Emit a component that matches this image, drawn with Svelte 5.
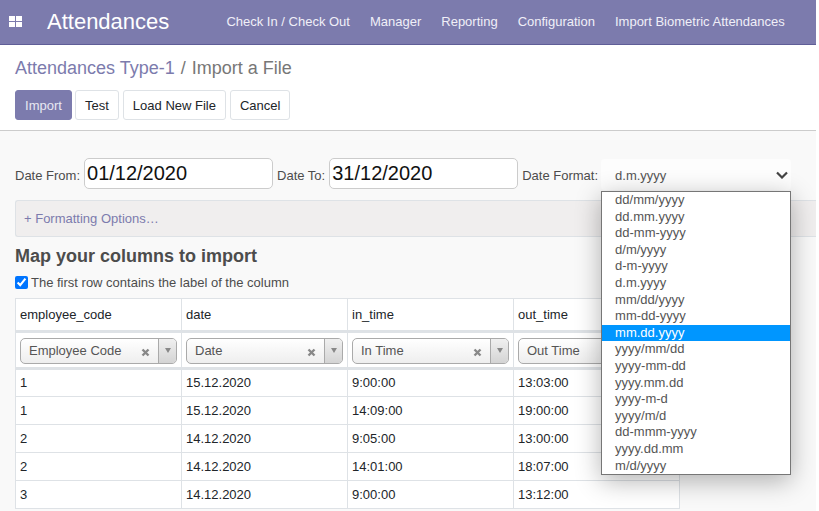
<script>
  const nav = ['Check In / Check Out', 'Manager', 'Reporting', 'Configuration', 'Import Biometric Attendances'];
  const formats = ['dd/mm/yyyy','dd.mm.yyyy','dd-mm-yyyy','d/m/yyyy','d-m-yyyy','d.m.yyyy','mm/dd/yyyy','mm-dd-yyyy','mm.dd.yyyy','yyyy/mm/dd','yyyy-mm-dd','yyyy.mm.dd','yyyy-m-d','yyyy/m/d','dd-mmm-yyyy','yyyy.dd.mm','m/d/yyyy'];
  const cols = [['employee_code','Employee Code'],['date','Date'],['in_time','In Time'],['out_time','Out Time']];
  const rows = [
    ['1','15.12.2020','9:00:00','13:03:00'],
    ['1','15.12.2020','14:09:00','19:00:00'],
    ['2','14.12.2020','9:05:00','13:00:00'],
    ['2','14.12.2020','14:01:00','18:07:00'],
    ['3','14.12.2020','9:00:00','13:12:00']
  ];
</script>

<div class="page">
  <header class="nav">
    <svg class="apps" width="13" height="11" viewBox="0 0 13 11"><path d="M0 0h6v5H0zM7 0h6v5H7zM0 6h6v5H0zM7 6h6v5H7z" fill="#fff"/></svg>
    <span class="brand">Attendances</span>
    <nav class="menu">
      {#each nav as item}<span>{item}</span>{/each}
    </nav>
  </header>

  <section class="control">
    <div class="crumbs"><span class="link">Attendances Type-1</span><span class="sep">/</span><span>Import a File</span></div>
    <div class="buttons">
      <button class="primary">Import</button>
      <button>Test</button>
      <button>Load New File</button>
      <button>Cancel</button>
    </div>
  </section>

  <main class="content">
    <div class="dates">
      <label for="from">Date From:</label>
      <input id="from" value="01/12/2020" readonly />
      <label for="to">Date To:</label>
      <input id="to" value="31/12/2020" readonly />
      <span class="lab">Date Format:</span>
      <div class="select">
        <span>d.m.yyyy</span>
        <svg width="12" height="8" viewBox="0 0 12 8"><path d="M1 1.500 6 6.500l5-5" fill="none" stroke="#444" stroke-width="2.200"/></svg>
        <ul class="dropdown">
          {#each formats as f}
            <li class:active={f === 'mm.dd.yyyy'}>{f}</li>
          {/each}
        </ul>
      </div>
    </div>

    <div class="options">+ Formatting Options…</div>

    <h2>Map your columns to import</h2>
    <label class="check"><input type="checkbox" checked /> The first row contains the label of the column</label>

    <div class="tablewrap">
    <table>
      <thead>
        <tr class="head">
          {#each cols as c}<th>{c[0]}</th>{/each}
        </tr>
        <tr class="map">
          {#each cols as c}
            <td>
              <div class="s2">
                <span class="s2text">{c[1]}</span>
                <svg class="x" width="9" height="9" viewBox="0 0 9 9"><path d="M1.500 1.500l6 6M7.500 1.500l-6 6" stroke="#888" stroke-width="2.400"/></svg>
                <span class="s2arrow"><i></i></span>
              </div>
            </td>
          {/each}
        </tr>
      </thead>
      <tbody>
        {#each rows as r}
          <tr>{#each r as v}<td>{v}</td>{/each}</tr>
        {/each}
      </tbody>
    </table>
    </div>
  </main>
</div>

<style>
  :global(body) { margin: 0; background: #fff; overflow: hidden; }
  .page { width: 816px; height: 511px; overflow: hidden; font: 13px "Liberation Sans", Arial, sans-serif; color: #4c4c4c; }
  .nav { height: 44px; background: #7c7bad; border-bottom: 1px solid #5f5e97; display: flex; align-items: center; color: #fff; }
  .apps { margin-left: 9px; margin-top: -1px; }
  .brand { font-size: 22px; margin-left: 25px; width: 179.400px; }
  .menu { display: flex; gap: 20px; margin-top: -1px; }
  .menu span { color: #f0eff8; font-size: 13px; }
  .control { height: 85px; background: #fff; border-bottom: 1px solid #ccc; padding-left: 15px; }
  .crumbs { height: 45px; padding-top: 1px; box-sizing: border-box; display: flex; align-items: center; gap: 6px; font-size: 18px; color: #777; }
  .crumbs .link { color: #7c7bad; }
  .buttons { display: flex; gap: 4px; }
  button { height: 30px; padding: 0 9px; border: 1px solid #dee2e6; border-radius: 3px; background: #fff; color: #212529; font: 13px "Liberation Sans", Arial, sans-serif; }
  button.primary { background: #7c7bad; border-color: #7c7bad; color: #e8e8f2; width: 57px; padding: 0; margin-right: -1px; }
  .content { background: #f9f9f9; height: 380px; padding: 27px 0 0 15px; box-sizing: border-box; }
  .dates { display: flex; height: 32px; align-items: flex-start; }
  .dates label, .lab { margin-top: 10px; margin-right: 4px; }
  .dates input { width: 189px; height: 31px; box-sizing: border-box; border: 1px solid #ccc; border-radius: 5px; padding: 0 2px; font: 20px "Liberation Sans", Arial, sans-serif; color: #111; background: #fff; margin-right: 4px; outline: none; }
  .lab { margin-right: 3px; }
  .select { position: relative; width: 190px; height: 31px; margin-top: 1px; background: #fdfdfd; border-radius: 4px; display: flex; align-items: center; justify-content: space-between; padding: 0 3px 0 14px; box-sizing: border-box; color: #555; }
  .select > span { margin-top: 2px; }
  .dropdown { position: absolute; z-index: 3; left: 0; top: 32px; width: 190px; margin: 0; padding: 0; list-style: none; box-sizing: border-box; border: 1px solid #767676; background: #fff; box-shadow: 0 6px 24px rgba(0,0,0,.3); }
  .dropdown li { height: 16.6px; line-height: 16.6px; padding-left: 13px; color: #555; }
  .dropdown li.active { background: #0096ff; color: #fff; }
  .options { margin-top: 10px; height: 37px; box-sizing: border-box; background: #f0eeee; border: 1px solid #dee2e6; border-right: 0; border-radius: 3px 0 0 3px; padding: 10px 8px; color: #7c7bad; }
  h2 { margin: 9px 0 0; font-size: 18px; line-height: 21px; color: #4c4c4c; font-weight: bold; }
  .check { display: flex; align-items: center; gap: 3px; margin-top: 7px; height: 16px; }
  .check input { margin: 0; width: 13px; height: 13px; }
  .tablewrap { margin-top: 8px; }
  table { border-collapse: collapse; table-layout: fixed; width: 665px; background: #fff; color: #212529; }
  th, td { border: 1px solid #dee2e6; width: 166px; box-sizing: border-box; padding: 0 4px; text-align: left; font-weight: normal; font-size: 13px; }
  tbody td { height: 28px; }
  tbody tr:first-child td { padding-bottom: 1px; }
  .head th { height: 33px; border-bottom: 3px solid #dee2e6; }
  .map td { height: 37px; border-bottom: 3px solid #dee2e6; padding: 1px 4px 0; }
  .s2 { height: 26px; display: flex; align-items: center; border: 1px solid #aaa; border-radius: 5px; background: linear-gradient(#fff, #eee); box-sizing: border-box; }
  .s2text { flex: 1; padding-left: 8px; color: #555; }
  .x { margin: 3px 8px 0 0; }
  .s2arrow { width: 17px; height: 100%; border-left: 1px solid #aaa; background: linear-gradient(#f0f0f0, #d4d4d4); display: flex; align-items: center; justify-content: center; border-radius: 0 4px 4px 0; }
  .s2arrow i { border: 3.500px solid transparent; border-top: 5px solid #888; border-bottom: 0; }
</style>
